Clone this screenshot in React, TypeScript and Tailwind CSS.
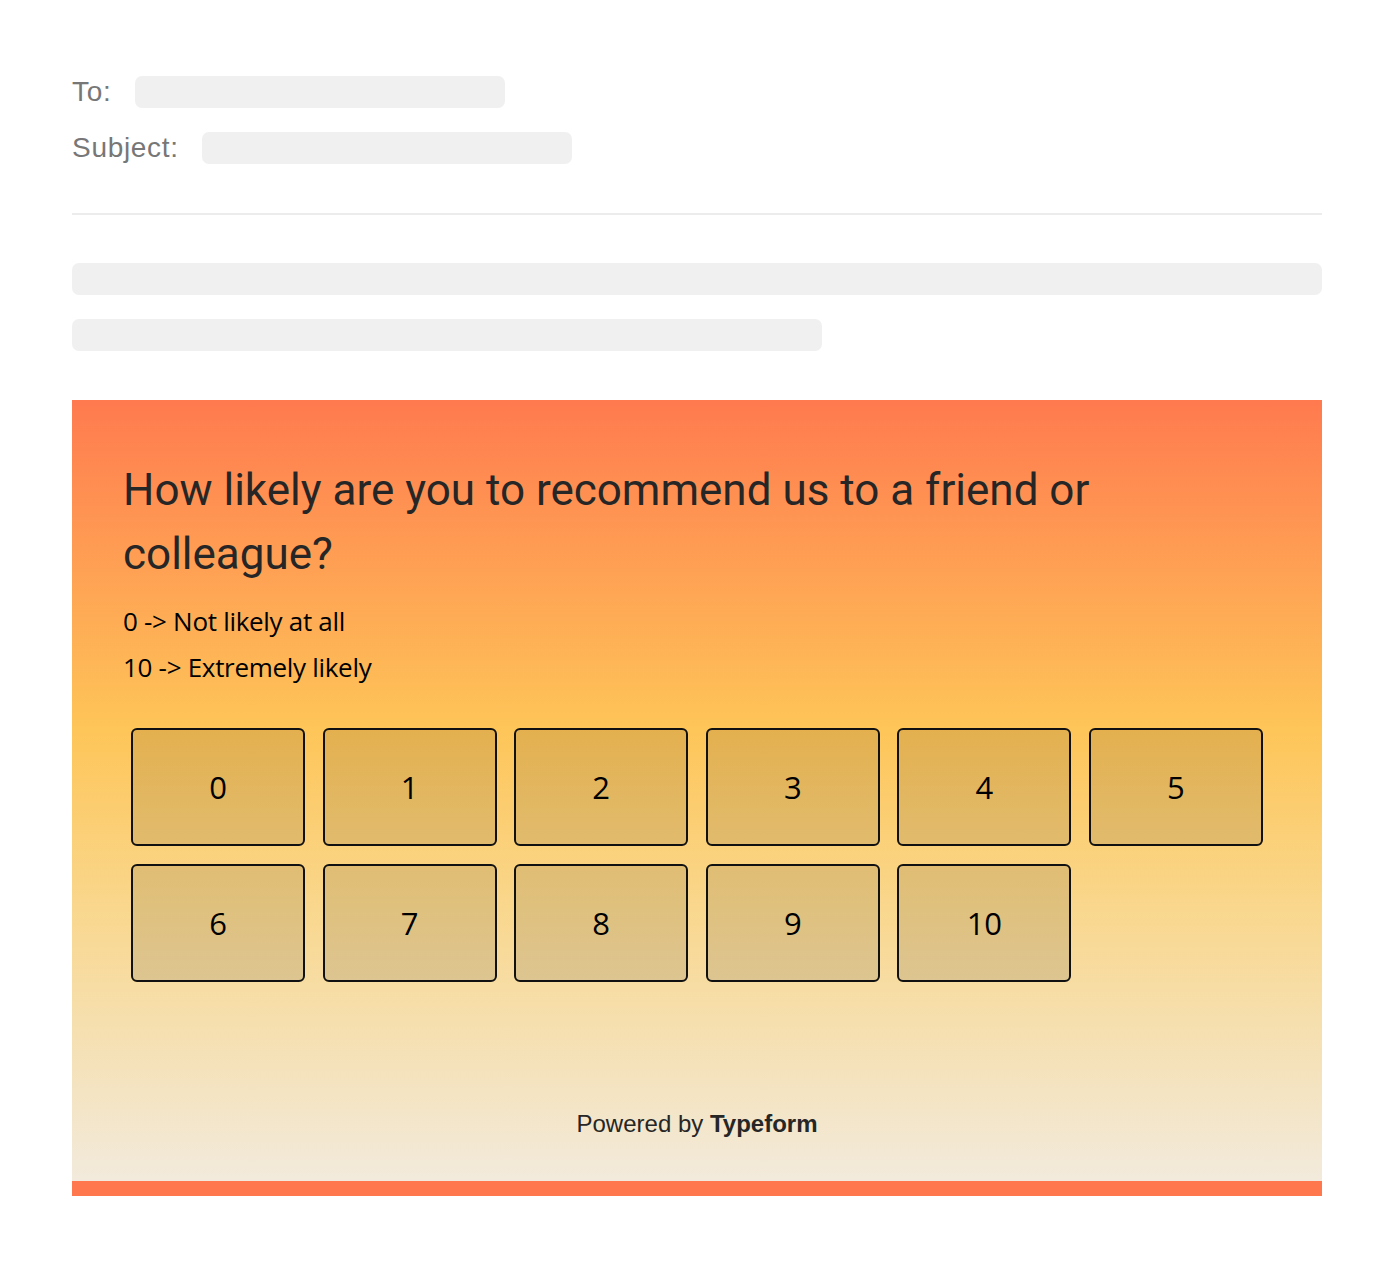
import React from "react";

export default function App() {
  const row1 = [0, 1, 2, 3, 4, 5];
  const row2 = [6, 7, 8, 9, 10];
  const Btn = ({ n }: { n: number }) => (
    <div className="h-[118px] w-[174px] rounded-[6px] border-2 border-[#111] bg-black/10 flex items-center justify-center text-[31px] text-black [font-family:'Open_Sans',sans-serif]">
      {n}
    </div>
  );
  return (
    <div className="bg-white w-[1390px] min-h-[1268px] pl-[72px] pr-[68px] pt-[76px] [font-family:'Liberation_Sans',Arial,sans-serif]">
      <div className="flex items-center h-[32px]">
        <span className="text-[28px] tracking-[0.7px] text-[#777] w-[63px] leading-none">To:</span>
        <div className="h-[32px] w-[370px] rounded-[7px] bg-[#f0f0f0]" />
      </div>
      <div className="flex items-center h-[32px] mt-[24px]">
        <span className="text-[28px] tracking-[0.7px] text-[#777] w-[130px] leading-none">Subject:</span>
        <div className="h-[32px] w-[370px] rounded-[7px] bg-[#f0f0f0]" />
      </div>
      <div className="mt-[49px] h-[2px] bg-[#ececec]" />
      <div className="mt-[48px] h-[32px] rounded-[7px] bg-[#f0f0f0]" />
      <div className="mt-[24px] h-[32px] w-[750px] rounded-[7px] bg-[#f0f0f0]" />
      <div className="mt-[49px] w-[1250px] bg-[linear-gradient(to_bottom,#ff7a4f_0%,#fec558_42%,#f9d78d_65%,#f2eadc_100%)] border-b-[15px] border-[#ff774d]">
        <div className="pl-[51px] pr-[51px] pt-[58px]">
          <h1 className="text-[44px] leading-[64px] text-[#262626] [font-family:Roboto,sans-serif] max-w-[1000px]">
            How likely are you to recommend us to a friend or colleague?
          </h1>
          <div className="mt-[12px] text-[26px] leading-[46px] text-black [font-family:'Open_Sans',sans-serif] tracking-[-0.3px]">
            <p>0 -&gt; Not likely at all</p>
            <p>10 -&gt; Extremely likely</p>
          </div>
          <div className="mt-[38px] ml-[8px] flex flex-col gap-[18px]">
            <div className="flex gap-[17.6px]">
              {row1.map((n) => (
                <Btn key={n} n={n} />
              ))}
            </div>
            <div className="flex gap-[17.6px]">
              {row2.map((n) => (
                <Btn key={n} n={n} />
              ))}
            </div>
          </div>
          <div className="mt-[127px] pb-[42px] text-center text-[24px] leading-[30px] text-[#262626]">
            Powered by <span className="font-bold">Typeform</span>
          </div>
        </div>
      </div>
    </div>
  );
}
